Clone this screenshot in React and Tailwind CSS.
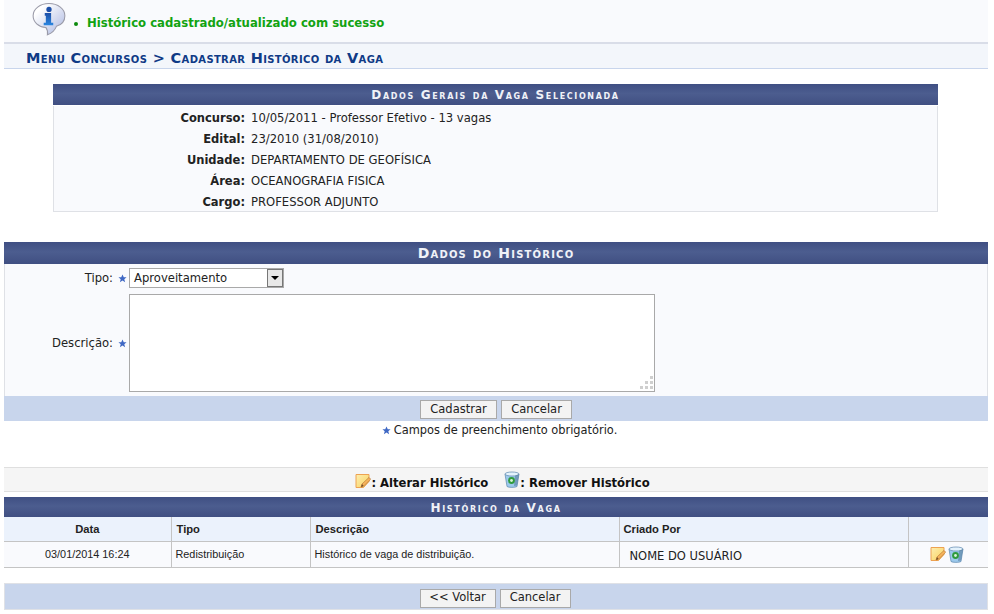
import { useState } from 'react';

const verdana = 'font-["DejaVu_Sans",Verdana,sans-serif]';

const generalData = [
  ['Concurso:', '10/05/2011 - Professor Efetivo - 13 vagas'],
  ['Edital:', '23/2010 (31/08/2010)'],
  ['Unidade:', 'DEPARTAMENTO DE GEOFÍSICA'],
  ['Área:', 'OCEANOGRAFIA FISICA'],
  ['Cargo:', 'PROFESSOR ADJUNTO'],
];

const InfoIcon = () => (
  <svg width="34" height="36" viewBox="0 0 32 34">
    <defs>
      <linearGradient id="bubble" x1="0" y1="0" x2="1" y2="1">
        <stop offset="0.2" stopColor="#ffffff" />
        <stop offset="1" stopColor="#a9b5e0" />
      </linearGradient>
      <linearGradient id="infoI" x1="0" y1="0" x2="0" y2="1">
        <stop offset="0" stopColor="#1d4fa8" />
        <stop offset="1" stopColor="#2a86e0" />
      </linearGradient>
    </defs>
    <path d="M16 1.5C7.5 1.5 1 6.5 1 13c0 6 5 10.5 12 11 1.5 2 2 4 1.5 7 4-1.5 7-4 8.5-8 5-1.5 8-5.5 8-10C31 6.5 24.5 1.5 16 1.5z" fill="url(#bubble)" stroke="#9a9aa8" strokeWidth="1" />
    <circle cx="16" cy="7" r="2.5" fill="#1d4fa8" />
    <path d="M12 10.5h6v9h2v2.5h-9v-2.5h2v-6.5h-1z" fill="url(#infoI)" />
  </svg>
);

const NoteIcon = () => (
  <svg width="16" height="16" viewBox="0 0 16 16" className="shrink-0">
    <defs>
      <linearGradient id="note" x1="0" y1="0" x2="1" y2="1">
        <stop offset="0" stopColor="#fdeeb0" />
        <stop offset="1" stopColor="#f9d25e" />
      </linearGradient>
    </defs>
    <path d="M1 1.5h13v7l-5.5 6H1z" fill="url(#note)" stroke="#eda251" strokeWidth="1" />
    <path d="M6 14l1-3 7-6.5 1.7 1.7L8.7 13z" fill="#f8b45c" stroke="#b67a3a" strokeWidth="0.7" />
    <path d="M6 14l1-3 1.7 2z" fill="#7a5128" />
  </svg>
);

const BinIcon = () => (
  <svg width="16" height="17" viewBox="0 0 16 17" className="shrink-0">
    <path d="M1 3l2 12.5c1.5 1.2 8 1.2 10 0L15 3z" fill="#9cc9ec" stroke="#5d86ad" strokeWidth="0.7" />
    <ellipse cx="8" cy="3" rx="7" ry="2" fill="#e3f2fc" stroke="#5d86ad" strokeWidth="0.7" />
    <path d="M11 5l-1 10 3-.6L15 3z" fill="#4f7496" opacity="0.55" />
    <circle cx="7.5" cy="9.5" r="3.4" fill="#2f9b3c" />
    <circle cx="7.5" cy="9.5" r="1.4" fill="#d9f2d9" />
  </svg>
);

const Star = ({ className = '' }) => (
  <svg width="9" height="9" viewBox="0 0 10 10" className={className}>
    <path d="M5 .5l1.4 3h3.1L7 5.7l.9 3.6L5 7.3 2.1 9.3 3 5.7.5 3.5h3.1z" fill="#3f68c4" />
  </svg>
);

const ResizeGrip = () => (
  <svg width="13" height="13" viewBox="0 0 13 13" className="absolute bottom-[3px] right-[2px]" fill="#cfcfcf">
    <rect x="10" y="0" width="3" height="3" />
    <rect x="5" y="5" width="3" height="3" />
    <rect x="10" y="5" width="3" height="3" />
    <rect x="0" y="10" width="3" height="3" />
    <rect x="5" y="10" width="3" height="3" />
    <rect x="10" y="10" width="3" height="3" />
  </svg>
);

const Caption = ({ children, className = '' }) => (
  <div
    className={`flex items-center justify-center bg-[linear-gradient(#3f4f83,#4c5d8f_45%,#404f82)] font-bold text-[#f0f2f8] [font-variant:small-caps] ${className}`}
  >
    {children}
  </div>
);

const FormButton = ({ children, className = '' }) => (
  <button className={`h-[19px] border border-[#a9a9a9] bg-[#f3f3f3] text-[11.5px] leading-none text-[#222] ${className}`}>
    {children}
  </button>
);

export default function App() {
  const [tipo, setTipo] = useState('Aproveitamento');

  return (
    <div className={`h-[614px] w-[994px] overflow-hidden bg-white pl-[4px] pr-[6px] text-[11.6px] text-[#222] ${verdana}`}>
      {/* Mensagem */}
      <div className="flex h-[44px] items-start border-b-2 border-[#d9dde8] bg-[#f9fafd] pl-[28px] pt-[2px]">
        <InfoIcon />
        <div className="ml-[8px] mt-[13px] flex items-center text-[11.7px] font-bold text-[#12a312]">
          <span className="mr-[9px] h-[4px] w-[4px] rounded-full bg-[#0d8a0d]" />
          Histórico cadastrado/atualizado com sucesso
        </div>
      </div>

      {/* Titulo */}
      <div className="flex h-[25px] items-center border-b border-[#c8d5ec] bg-[#f3f6fb] pl-[22px] pt-[5px] text-[14.5px] font-bold tracking-[0.35px] text-[#0f3a86] [font-variant:small-caps]">
        Menu Concursos &gt; Cadastrar Histórico da Vaga
      </div>

      {/* Dados gerais */}
      <div className="ml-[49px] mt-[15px] w-[885px]">
        <Caption className="h-[21px] text-[12px] tracking-[1.65px]">Dados Gerais da Vaga Selecionada</Caption>
        <div className="mt-px h-[106px] border border-t-0 border-[#dfe1e6] bg-[#f9fafd] pt-[2px]">
          {generalData.map(([label, value]) => (
            <div key={label} className="flex h-[21px] items-center">
              <div className="w-[191px] text-right text-[11.5px] font-bold">{label}</div>
              <div className="ml-[6px]">{value}</div>
            </div>
          ))}
        </div>
      </div>

      {/* Formulario */}
      <div className="mt-[30px]">
        <Caption className="h-[22px] pt-[1px] text-[14px] tracking-[1.2px]">Dados do Histórico</Caption>
        <div className="h-[132px] border-x border-[#dfe1e6] bg-[#f9fafd]">
          <div className="flex h-[30px] items-start pt-[4px]">
            <div className="flex h-[20px] w-[123px] items-center justify-end gap-[5px] pr-[1px] pt-[1px]">
              Tipo: <Star />
            </div>
            <div className="relative ml-[1px] h-[20px] w-[155px] border border-[#a9a9a9] bg-white pl-[4px] leading-[19px]">
              {tipo}
              <select
                value={tipo}
                onChange={(e) => setTipo(e.target.value)}
                className="absolute inset-0 opacity-0"
              >
                <option>Aproveitamento</option>
                <option>Redistribuição</option>
              </select>
              <span className="absolute right-0 top-0 flex h-[18px] w-[16px] items-center justify-center border border-[#777] bg-[#e8e8e8]">
                <span className="h-0 w-0 border-x-[4px] border-t-[4px] border-x-transparent border-t-black" />
              </span>
            </div>
          </div>
          <div className="flex items-center">
            <div className="flex w-[123px] items-center justify-end gap-[5px] pr-[1px] pt-[1px]">
              Descrição: <Star />
            </div>
            <div className="relative ml-[1px]">
              <textarea className="block h-[98px] w-[526px] resize-none border border-[#a9a9a9] bg-white" />
              <ResizeGrip />
            </div>
          </div>
        </div>
        <div className="flex h-[25px] items-center justify-center gap-[4px] bg-[#c8d5ec] pt-[2px]">
          <FormButton className="w-[77px]">Cadastrar</FormButton>
          <FormButton className="w-[71px]">Cancelar</FormButton>
        </div>
        <div className="mt-[2px] flex h-[15px] items-center justify-center gap-[3px] pl-[7px] text-[11.4px]">
          <Star /> Campos de preenchimento obrigatório.
        </div>
      </div>

      {/* Legenda */}
      <div className="mt-[29px] flex h-[25px] items-center justify-center border-y border-[#dfdfdf] bg-[#f5f5f5] pl-[13px] text-[11.6px] font-bold text-[#111]">
        <span className="mt-[2px]">
          <NoteIcon />
        </span>
        <span className="mr-[16px] mt-[9px]">: Alterar Histórico</span>
        <BinIcon />
        <span className="mt-[9px]">: Remover Histórico</span>
      </div>

      {/* Listagem */}
      <div className="mt-[5px]">
        <Caption className="h-[20px] pt-[2px] text-[12px] tracking-[1.7px]">Histórico da Vaga</Caption>
        <table className="w-full table-fixed border-collapse font-['Liberation_Sans',Arial,sans-serif] text-[10.85px]">
          <colgroup>
            <col className="w-[167px]" />
            <col className="w-[139px]" />
            <col className="w-[309px]" />
            <col className="w-[289px]" />
            <col />
          </colgroup>
          <thead>
            <tr className="h-[24px] border-b border-[#c4c4c4] bg-[#ebf2fc] text-[11.2px] font-bold">
              <th className="border-r border-[#c4c4c4] pt-[2px] text-center">Data</th>
              <th className="border-r border-[#c4c4c4] pl-[5px] pt-[2px] text-left">Tipo</th>
              <th className="border-r border-[#c4c4c4] pl-[5px] pt-[2px] text-left">Descrição</th>
              <th className="border-r border-[#c4c4c4] pl-[4px] pt-[2px] text-left">Criado Por</th>
              <th />
            </tr>
          </thead>
          <tbody>
            <tr className="h-[26px] border-b border-[#c4c4c4] bg-[#f9fafd]">
              <td className="border-r border-[#c4c4c4] text-center">03/01/2014 16:24</td>
              <td className="border-r border-[#c4c4c4] pl-[4px]">Redistribuição</td>
              <td className="border-r border-[#c4c4c4] pl-[4px]">Histórico de vaga de distribuição.</td>
              <td className={`border-r border-[#c4c4c4] pl-[10px] pt-[5px] text-[11.5px] ${verdana}`}>NOME DO USUÁRIO</td>
              <td className="pr-[24px]">
                <div className="flex justify-end gap-[2px]">
                  <NoteIcon />
                  <BinIcon />
                </div>
              </td>
            </tr>
          </tbody>
        </table>
      </div>

      {/* Voltar */}
      <div className="mt-[15px] flex h-[27px] items-center justify-center gap-[4px] border border-[#dfe1e6] bg-[#c8d5ec] pr-[2px] pt-[4px]">
        <FormButton className="w-[76px]">&lt;&lt; Voltar</FormButton>
        <FormButton className="w-[71px]">Cancelar</FormButton>
      </div>
    </div>
  );
}
